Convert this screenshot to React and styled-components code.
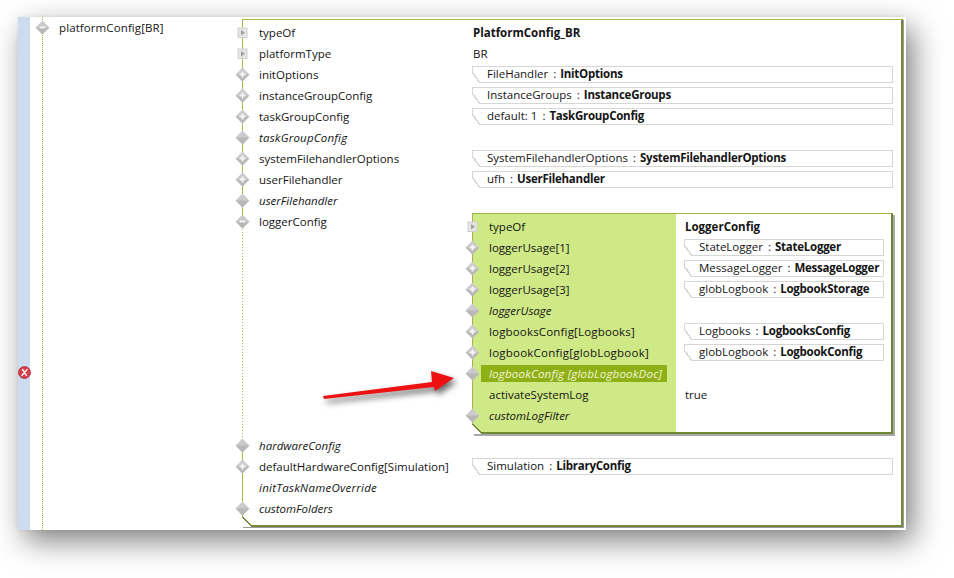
import React from "react";
import styled, { createGlobalStyle } from "styled-components";

const Global = createGlobalStyle`
  html, body { margin: 0; padding: 0; background: #fff; }
  body { font-family: "Open Sans", "Liberation Sans", sans-serif; font-size: 11.5px; color: #141414; }
  #root { width: 954px; height: 578px; overflow: hidden; }
`;

const Page = styled.div`
  position: relative;
  width: 954px;
  height: 578px;
  padding: 17px 0 0 18px;
  box-sizing: border-box;
`;

const Frame = styled.div`
  display: flex;
  width: 888px;
  height: 513px;
  background: #fff;
  overflow: hidden;
  box-shadow: 7px 11px 28px rgba(0, 0, 0, 0.5), 0 0 3px rgba(0, 0, 0, 0.08);
`;

const Gutter = styled.div`
  width: 12px;
  flex: none;
  background: #ccdcee;
  padding-top: 349px;
  box-sizing: border-box;
`;

const Spine = styled.div`
  position: relative;
  flex: 1;
  display: flex;
  margin-left: 12px;
  padding-left: 16px;
  border-left: 1px dotted #a9ad3c;
`;

const RootName = styled.div`
  width: 183px;
  flex: none;
  height: 21px;
  line-height: 21px;
  letter-spacing: 0.1px;
`;

const Panel = styled.div`
  position: relative;
  box-sizing: border-box;
  width: 661px;
  height: 508px;
  margin-top: 2px;
  padding-top: 2px;
  background: #fff;
  border-style: solid;
  border-color: #a9b746 #76883a #76883a #a9b746;
  border-width: 1px 2px 2px 1px;
  box-shadow: 1px 1px 0 #9a9a9a;
  &::after {
    content: "";
    position: absolute;
    left: -1px;
    bottom: -2px;
    width: 10px;
    height: 10px;
    background: linear-gradient(to top right, #fff 46%, #76883a 46%, #76883a 56%, transparent 56%);
  }
`;

const Nested = styled.div`
  position: relative;
  box-sizing: border-box;
  width: 421px;
  height: 221px;
  margin: 2px 0 1px;
  padding-top: 2px;
  background: linear-gradient(to right, #cfe986 203px, #fff 203px);
  border-style: solid;
  border-color: #a3b24a #6f8636 #6f8636 #a3b24a;
  border-width: 1px 2px 2px 1px;
  box-shadow: 2px 2px 0 #a8a8a8;
  &::after {
    content: "";
    position: absolute;
    left: -1px;
    bottom: -2px;
    width: 10px;
    height: 10px;
    background: linear-gradient(to top right, #fff 46%, #6f8636 46%, #6f8636 58%, transparent 58%);
  }
`;

const Row = styled.div`
  display: grid;
  grid-template-columns: ${(p) => p.$nameWidth}px 1fr;
  min-height: 21px;
`;

const Name = styled.div`
  position: relative;
  height: 21px;
  line-height: 21px;
  padding-left: 16px;
  font-style: ${(p) => (p.$italic ? "italic" : "normal")};
  letter-spacing: ${(p) => p.$track || 0}px;
  white-space: nowrap;
  ${(p) =>
    p.$expanded &&
    `&::before {
      content: "";
      position: absolute;
      left: -1px;
      top: 15px;
      width: 1px;
      height: 214px;
      background: repeating-linear-gradient(to bottom, #b4b84e 0 1px, #fff 1px 3px);
    }`}
`;

const Selected = styled.span`
  display: block;
  margin: 2px 8px 2px -8px;
  padding-left: 8px;
  height: 17px;
  line-height: 17px;
  background: #8fb014;
  color: #f2f6dc;
`;

const Marker = styled.svg`
  position: absolute;
  left: ${(p) => p.$left}px;
  top: 3px;
  width: 15px;
  height: 15px;
`;

const ValueCell = styled.div`
  padding-right: ${(p) => (p.$nested ? 7 : 8)}px;
  padding-left: ${(p) => (p.$nested ? 9 : 0)}px;
  min-width: 0;
`;

const PlainValue = styled.div`
  height: 21px;
  line-height: 21px;
  padding-left: 1px;
  font-weight: ${(p) => (p.$bold ? 700 : 400)};
`;

const Pill = styled.div`
  position: relative;
  box-sizing: border-box;
  height: 17px;
  margin-top: 2px;
  line-height: 13px;
  padding-left: 14px;
  border: 1px solid #d6d6d6;
  background: #fff;
  white-space: nowrap;
  &::before {
    content: "";
    position: absolute;
    left: -1px;
    bottom: -1px;
    width: 8px;
    height: 11px;
    background: linear-gradient(to top right, #fff 45%, #d6d6d6 45%, #d6d6d6 56%, transparent 56%);
  }
  b { font-weight: 700; letter-spacing: -0.25px; }
  i { font-style: normal; margin: 0 4px 0 5px; }
`;

const ArrowOverlay = styled.svg`
  position: absolute;
  left: 315px;
  top: 362px;
  width: 150px;
  height: 50px;
  filter: drop-shadow(3px 4px 3px rgba(0, 0, 0, 0.6));
`;

const ErrorIcon = () => (
  <svg width="13" height="13" viewBox="0 0 13 13" style={{ display: "block" }}>
    <circle cx="6.5" cy="6.5" r="6" fill="#d5404a" stroke="#a92a32" strokeWidth="0.8" />
    <path d="M4.6 3.6 L8.4 9.4 M9 3.6 L4 9.4" stroke="#fff" strokeWidth="1.4" strokeLinecap="round" />
  </svg>
);

const Icon = ({ kind, left }) => {
  if (kind === "type") {
    return (
      <Marker $left={left} viewBox="0 0 15 15">
        <rect x="3" y="3" width="9" height="9.5" fill="#e6e6e6" stroke="#cfcfcf" />
        <path d="M6 5 L10 7.7 L6 10.5 Z" fill="#a0a0a0" />
      </Marker>
    );
  }
  return (
    <Marker $left={left} viewBox="0 0 15 15">
      <path d="M7.5 0.6 L14.4 7.5 L7.5 14.4 L0.6 7.5 Z" fill="#cbcbcb" />
      <path d="M0.6 7.5 L14.4 7.5 L7.5 14.4 Z" fill="#b8b8b8" />
      {kind === "plus" && <path d="M7.5 4.6 V10.4 M4.6 7.5 H10.4" stroke="#f6f6f6" strokeWidth="1.8" />}
      {kind === "minus" && <path d="M4.6 7.5 H10.4" stroke="#f6f6f6" strokeWidth="1.8" />}
    </Marker>
  );
};

const nestedRows = [
  { name: "typeOf", icon: "type", bold: "LoggerConfig" },
  { name: "loggerUsage[1]", icon: "plus", pill: ["StateLogger", "StateLogger"] },
  { name: "loggerUsage[2]", icon: "plus", pill: ["MessageLogger", "MessageLogger"] },
  { name: "loggerUsage[3]", icon: "plus", pill: ["globLogbook", "LogbookStorage"] },
  { name: "loggerUsage", icon: "diamond", italic: true },
  { name: "logbooksConfig[Logbooks]", icon: "plus", track: 0.17, pill: ["Logbooks", "LogbooksConfig"] },
  { name: "logbookConfig[globLogbook]", icon: "plus", track: 0.23, pill: ["globLogbook", "LogbookConfig"] },
  { name: "logbookConfig [globLogbookDoc]", icon: "diamond", italic: true, track: 0.2, selected: true },
  { name: "activateSystemLog", plain: "true" },
  { name: "customLogFilter", icon: "diamond", italic: true },
];

const outerRows = [
  { name: "typeOf", icon: "type", bold: "PlatformConfig_BR" },
  { name: "platformType", icon: "type", plain: "BR" },
  { name: "initOptions", icon: "plus", pill: ["FileHandler", "InitOptions"] },
  { name: "instanceGroupConfig", icon: "plus", pill: ["InstanceGroups", "InstanceGroups"] },
  { name: "taskGroupConfig", icon: "plus", pill: ["default: 1", "TaskGroupConfig"] },
  { name: "taskGroupConfig", icon: "diamond", italic: true, track: 0.2 },
  { name: "systemFilehandlerOptions", icon: "plus", pill: ["SystemFilehandlerOptions", "SystemFilehandlerOptions"] },
  { name: "userFilehandler", icon: "plus", pill: ["ufh", "UserFilehandler"] },
  { name: "userFilehandler", icon: "diamond", italic: true },
  { name: "loggerConfig", icon: "minus", nested: true },
  { name: "hardwareConfig", icon: "diamond", italic: true },
  { name: "defaultHardwareConfig[Simulation]", icon: "plus", pill: ["Simulation", "LibraryConfig"] },
  { name: "initTaskNameOverride", italic: true, track: 0.25 },
  { name: "customFolders", icon: "diamond", italic: true },
];

const Value = ({ row, nested }) => (
  <ValueCell $nested={nested}>
    {row.bold && <PlainValue $bold>{row.bold}</PlainValue>}
    {row.plain && <PlainValue>{row.plain}</PlainValue>}
    {row.pill && (
      <Pill>
        {row.pill[0]}
        <i>:</i>
        <b>{row.pill[1]}</b>
      </Pill>
    )}
    {row.nested && (
      <Nested>
        {nestedRows.map((r) => (
          <TreeRow key={r.name} row={r} width={202} nested />
        ))}
      </Nested>
    )}
  </ValueCell>
);

const TreeRow = ({ row, width, nested }) => (
  <Row $nameWidth={width}>
    <Name $italic={row.italic} $track={row.track} $expanded={row.nested}>
      {row.icon && <Icon kind={row.icon} left={-8} />}
      {row.selected ? <Selected>{row.name}</Selected> : row.name}
    </Name>
    <Value row={row} nested={nested} />
  </Row>
);

export default function App() {
  return (
    <Page>
      <Global />
      <Frame>
        <Gutter>
          <ErrorIcon />
        </Gutter>
        <Spine>
          <Icon kind="minus" left={-8} />
          <RootName>platformConfig[BR]</RootName>
          <Panel>
            {outerRows.map((r, i) => (
              <TreeRow key={i} row={r} width={229} />
            ))}
          </Panel>
        </Spine>
      </Frame>
      <ArrowOverlay viewBox="0 0 150 50">
        <path d="M8 34 L117 20 L116 9 L139 16 L120 29 L119 25 L9 37 Z" fill="#ee1111" />
      </ArrowOverlay>
    </Page>
  );
}
